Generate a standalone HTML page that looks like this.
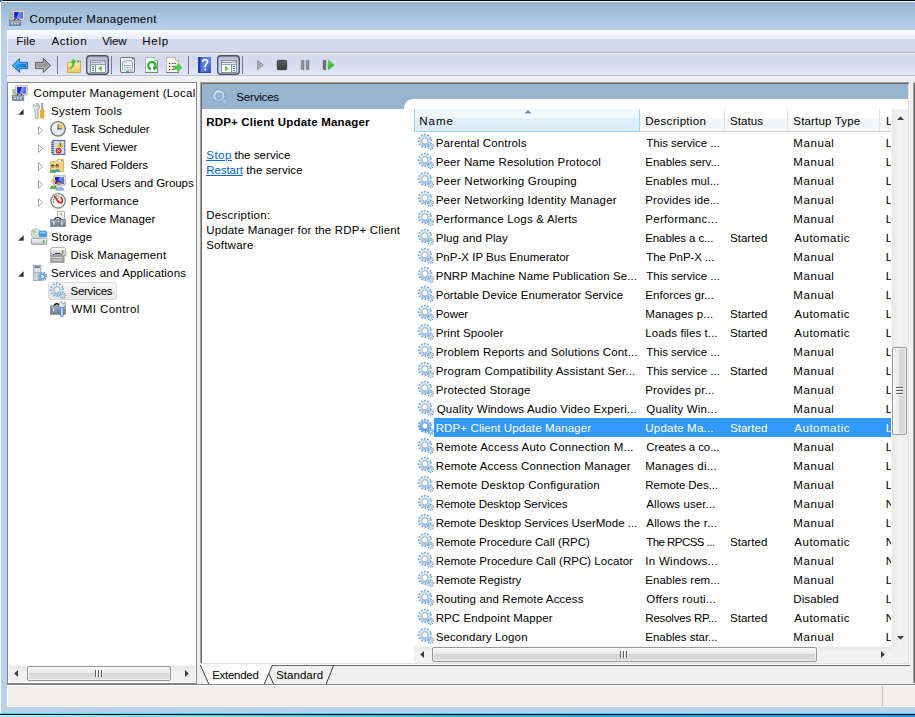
<!DOCTYPE html>
<html lang="en">
<head>
<meta charset="utf-8">
<title>Computer Management</title>
<style>
html,body{margin:0;padding:0;}
body{width:915px;height:717px;overflow:hidden;position:relative;background:#8eeefc;font-family:"Liberation Sans",sans-serif;font-size:11.5px;color:#000;}
.a{position:absolute;box-sizing:border-box;}
.t{position:absolute;white-space:pre;line-height:14px;height:14px;font-size:11.5px;color:#000;}
.t.b{font-weight:bold;}
.t.w{color:#fff;}
.t.lnk{color:#0066cc;text-decoration:underline;}
.ic{position:absolute;overflow:visible;}
</style>
</head>
<body>
<!-- desktop strip at the bottom -->
<div class="a" style="left:0;top:713px;width:915px;height:1px;background:#45d6ee"></div>
<div class="a" style="left:0;top:714px;width:915px;height:1px;background:#000"></div>
<div class="a" style="left:0;top:715px;width:915px;height:2px;background:linear-gradient(90deg,#a8f5ff 0,#8eeeff 6%,#58d2f8 30%,#30b6f5 50%,#20a6f5 70%,#1e9bf0 100%)"></div>
<!-- window frame -->
<div class="a" id="win" style="left:0;top:0;width:915px;height:713px;background:#b9d1ea;"></div>
<div class="a" style="left:0;top:0;width:915px;height:1px;background:#000"></div>
<div class="a" style="left:0;top:1px;width:915px;height:1px;background:#fff"></div>
<div class="a" style="left:0;top:2px;width:1px;height:711px;background:#fff"></div>
<div class="a" id="cap" style="left:1px;top:2px;width:914px;height:28px;background:linear-gradient(#98b3d2,#b9d1ea)"></div>
<div class="a" style="left:0;top:0;width:2px;height:1px;background:#1c58c0"></div><div class="a" style="left:0;top:1px;width:1px;height:1px;background:#2a62c4"></div><div class="a" style="left:2px;top:0;width:1px;height:1px;background:#55607a"></div>
<!-- menu bar -->
<div class="a" id="menu" style="left:7px;top:30px;width:908px;height:22px;background:linear-gradient(#fff 0,#e8ecf7 9px,#d4daed 9px,#d4daed 22px)"></div>
<div class="a" style="left:7px;top:52px;width:908px;height:1px;background:#aeaeb0"></div>
<!-- toolbar -->
<div class="a" id="tb" style="left:7px;top:53px;width:908px;height:22px;background:linear-gradient(#f1f4fb 0,#f1f4fb 1px,#d4daed 1px,#d6dcee 11px,#e0e6f5 22px)"></div>
<div class="a" style="left:7px;top:75px;width:908px;height:1px;background:#b8c0d6"></div>
<div class="a" style="left:7px;top:30px;width:1px;height:45px;background:rgba(255,255,255,.55)"></div>
<!-- client bg -->
<div class="a" id="client" style="left:7px;top:76px;width:908px;height:609px;background:#f0f0f0"></div>
<!-- tree pane -->
<div class="a" id="tree" style="left:7px;top:82px;width:190px;height:602px;background:#fff;border:1px solid #828790"></div>
<!-- tree hscroll -->
<div class="a" style="left:9px;top:665px;width:186px;height:1px;background:#f8f8f8"></div><div class="a" style="left:9px;top:666px;width:186px;height:16px;background:linear-gradient(#e8e8e8,#f2f2f2 40%,#f0f0f0)"></div>
<!-- result pane -->
<div class="a" id="res" style="left:200px;top:82px;width:710px;height:583px;background:#fff;border-left:1px solid #a0a0a0;border-top:1px solid #a0a0a0;border-right:1px solid #fff;"></div>
<div class="a" style="left:201px;top:83px;width:708px;height:580px;border-left:1px solid #696969;border-top:1px solid #696969;border-right:1px solid #e3e3e3"></div>
<div class="a" id="reshead" style="left:202px;top:84px;width:706px;height:25px;background:#99b4d1"></div>
<div class="a" style="left:404px;top:99px;width:504px;height:10px;background:#fff;border-top-left-radius:9px"></div>
<!-- actions pane sliver -->
<div class="a" style="left:913px;top:82px;width:1px;height:601px;background:#a0a0a0"></div>
<div class="a" style="left:914px;top:83px;width:1px;height:600px;background:#696969"></div>
<!-- column headers -->
<div class="a" id="hdr" style="left:414px;top:109px;width:477px;height:23px;background:linear-gradient(#fff 0,#fff 9px,#f5f6f8 9px,#f4f5f7 22px);border-bottom:1px solid #d5d5d5"></div>
<div class="a" id="hname" style="left:414px;top:109px;width:226px;height:23px;background:linear-gradient(#f2f9fd 0,#f2f9fd 9px,#e1effa 9px,#dcebf8 22px);border:1px solid #9fd5f2;border-top:none;"></div>
<div class="a" style="left:724px;top:109px;width:1px;height:22px;background:#e2e3e8"></div>
<div class="a" style="left:787px;top:109px;width:1px;height:22px;background:#e2e3e8"></div>
<div class="a" style="left:879px;top:109px;width:1px;height:22px;background:#e2e3e8"></div>
<svg class="ic" style="left:524px;top:109px" width="8" height="5" viewBox="0 0 8 5"><path d="M0.5 4.5 L4 1 L7.5 4.5 Z" fill="#5a8fbf"/></svg>
<!-- selected row -->
<div class="a" style="left:434px;top:418px;width:457px;height:19px;background:#3399ff"></div>
<!-- vertical scrollbar -->
<div class="a" style="left:891px;top:109px;width:1px;height:537px;background:#f8f8f8"></div>
<div class="a" id="vs" style="left:892px;top:109px;width:16px;height:537px;background:linear-gradient(90deg,#e8e8e8,#f2f2f2 40%,#f0f0f0)"></div>
<div class="a" id="vthumb" style="left:892px;top:347px;width:15px;height:88px;border:1px solid #979797;border-radius:2px;background:linear-gradient(90deg,#f5f5f5 0,#ececec 45%,#d6d6d9 50%,#dddde0 100%);box-shadow:inset 0 0 0 1px rgba(255,255,255,.6)"></div>
<svg class="ic" style="left:897px;top:116px" width="7" height="4" viewBox="0 0 7 4"><path d="M0 4 L3.5 0.2 L7 4 Z" fill="#3c3c3c"/></svg>
<svg class="ic" style="left:897px;top:636px" width="7" height="4" viewBox="0 0 7 4"><path d="M0 0 L7 0 L3.5 3.8 Z" fill="#3c3c3c"/></svg>
<div class="a" style="left:896px;top:387px;width:7px;height:1px;background:#5a5a5a"></div><div class="a" style="left:896px;top:388px;width:7px;height:1px;background:#fafafa"></div>
<div class="a" style="left:896px;top:390px;width:7px;height:1px;background:#5a5a5a"></div><div class="a" style="left:896px;top:391px;width:7px;height:1px;background:#fafafa"></div>
<div class="a" style="left:896px;top:393px;width:7px;height:1px;background:#5a5a5a"></div><div class="a" style="left:896px;top:394px;width:7px;height:1px;background:#fafafa"></div>
<!-- horizontal scrollbar (list) -->
<div class="a" style="left:414px;top:646px;width:494px;height:1px;background:#f8f8f8"></div>
<div class="a" id="hs" style="left:414px;top:647px;width:477px;height:16px;background:linear-gradient(#e8e8e8,#f2f2f2 40%,#f0f0f0)"></div>
<div class="a" style="left:891px;top:646px;width:17px;height:17px;background:#f0f0f0"></div>
<div class="a" id="hthumb" style="left:432px;top:647px;width:385px;height:15px;border:1px solid #979797;border-radius:2px;background:linear-gradient(#f5f5f5 0,#ececec 45%,#d6d6d9 50%,#dddde0 100%);box-shadow:inset 0 0 0 1px rgba(255,255,255,.6)"></div>
<svg class="ic" style="left:420px;top:651px" width="4" height="7" viewBox="0 0 4 7"><path d="M4 0 L4 7 L0.2 3.5 Z" fill="#3c3c3c"/></svg>
<svg class="ic" style="left:881px;top:651px" width="4" height="7" viewBox="0 0 4 7"><path d="M0 0 L0 7 L3.8 3.5 Z" fill="#3c3c3c"/></svg>
<div class="a" style="left:620px;top:651px;width:1px;height:7px;background:#5a5a5a"></div><div class="a" style="left:621px;top:651px;width:1px;height:7px;background:#fafafa"></div>
<div class="a" style="left:623px;top:651px;width:1px;height:7px;background:#5a5a5a"></div><div class="a" style="left:624px;top:651px;width:1px;height:7px;background:#fafafa"></div>
<div class="a" style="left:626px;top:651px;width:1px;height:7px;background:#5a5a5a"></div><div class="a" style="left:627px;top:651px;width:1px;height:7px;background:#fafafa"></div>
<!-- tree hscroll details -->
<div class="a" style="left:27px;top:666px;width:144px;height:15px;border:1px solid #979797;border-radius:2px;background:linear-gradient(#f5f5f5 0,#ececec 45%,#d6d6d9 50%,#dddde0 100%);box-shadow:inset 0 0 0 1px rgba(255,255,255,.6)"></div>
<svg class="ic" style="left:14px;top:670px" width="4" height="7" viewBox="0 0 4 7"><path d="M4 0 L4 7 L0.2 3.5 Z" fill="#3c3c3c"/></svg>
<svg class="ic" style="left:185px;top:670px" width="4" height="7" viewBox="0 0 4 7"><path d="M0 0 L0 7 L3.8 3.5 Z" fill="#3c3c3c"/></svg>
<div class="a" style="left:95px;top:670px;width:1px;height:7px;background:#5a5a5a"></div><div class="a" style="left:96px;top:670px;width:1px;height:7px;background:#fafafa"></div>
<div class="a" style="left:98px;top:670px;width:1px;height:7px;background:#5a5a5a"></div><div class="a" style="left:99px;top:670px;width:1px;height:7px;background:#fafafa"></div>
<div class="a" style="left:101px;top:670px;width:1px;height:7px;background:#5a5a5a"></div><div class="a" style="left:102px;top:670px;width:1px;height:7px;background:#fafafa"></div>
<!-- tabs -->
<svg class="ic" style="left:0;top:0" width="915" height="717" viewBox="0 0 915 717">
<rect x="197" y="665" width="716" height="19" fill="#f0f0f0"/>
<rect x="200" y="663" width="709" height="1" fill="#e3e3e3"/>
<rect x="200" y="664" width="710" height="1" fill="#fff"/>
<path d="M200 664 L272.5 664 L264.5 684 L208.8 684 Z" fill="#fff"/>
<rect x="272" y="665" width="638" height="1" fill="#696969"/>
<path d="M200.3 665 L208.8 684 M272.4 665.2 L264.3 684 M268.9 673.7 L273.6 684 M333.6 665.4 L326.2 684" stroke="#3c3c3c" stroke-width="1" fill="none"/>
<rect x="7" y="684" width="908" height="1" fill="#828282"/>
</svg>
<!-- status bar -->
<div class="a" style="left:7px;top:685px;width:908px;height:1px;background:#fff"></div>
<div class="a" id="status" style="left:7px;top:686px;width:908px;height:20px;background:#f0eded"></div>
<div class="a" style="left:7px;top:685px;width:1px;height:22px;background:#fff"></div>
<div class="a" style="left:7px;top:706px;width:908px;height:1px;background:#fff"></div>
<div class="a" style="left:882px;top:686px;width:1px;height:20px;background:#c5c3c3"></div>
<!-- tree selection -->
<div class="a" style="left:48px;top:282px;width:69px;height:18px;border:1px solid #d9d9d9;border-radius:3px;background:linear-gradient(#f8f8f8,#e5e5e5)"></div>
<svg class="ic" style="left:418px;top:134px" width="16" height="16" viewBox="0 0 16 16"><g><circle cx="6.9" cy="6.9" r="6" fill="none" stroke="#7fa4ca" stroke-width="2.2" stroke-dasharray="1.7 1.4416" transform="rotate(-16 6.9 6.9)"/>
<circle cx="6.9" cy="6.9" r="4.4" fill="none" stroke="url(#gring)" stroke-width="2.4"/>
<circle cx="6.9" cy="6.9" r="3.1" fill="none" stroke="#858d94" stroke-width="0.8" stroke-opacity="0.85"/>
<circle cx="12.6" cy="12.6" r="2.7" fill="none" stroke="#7fa4ca" stroke-width="1.7" stroke-dasharray="1.1 1.0206" transform="rotate(-15 12.6 12.6)"/>
<circle cx="12.6" cy="12.6" r="1.6" fill="none" stroke="#a3c7e6" stroke-width="1.3"/></g></svg>
<svg class="ic" style="left:418px;top:153px" width="16" height="16" viewBox="0 0 16 16"><g><circle cx="6.9" cy="6.9" r="6" fill="none" stroke="#7fa4ca" stroke-width="2.2" stroke-dasharray="1.7 1.4416" transform="rotate(-16 6.9 6.9)"/>
<circle cx="6.9" cy="6.9" r="4.4" fill="none" stroke="url(#gring)" stroke-width="2.4"/>
<circle cx="6.9" cy="6.9" r="3.1" fill="none" stroke="#858d94" stroke-width="0.8" stroke-opacity="0.85"/>
<circle cx="12.6" cy="12.6" r="2.7" fill="none" stroke="#7fa4ca" stroke-width="1.7" stroke-dasharray="1.1 1.0206" transform="rotate(-15 12.6 12.6)"/>
<circle cx="12.6" cy="12.6" r="1.6" fill="none" stroke="#a3c7e6" stroke-width="1.3"/></g></svg>
<svg class="ic" style="left:418px;top:172px" width="16" height="16" viewBox="0 0 16 16"><g><circle cx="6.9" cy="6.9" r="6" fill="none" stroke="#7fa4ca" stroke-width="2.2" stroke-dasharray="1.7 1.4416" transform="rotate(-16 6.9 6.9)"/>
<circle cx="6.9" cy="6.9" r="4.4" fill="none" stroke="url(#gring)" stroke-width="2.4"/>
<circle cx="6.9" cy="6.9" r="3.1" fill="none" stroke="#858d94" stroke-width="0.8" stroke-opacity="0.85"/>
<circle cx="12.6" cy="12.6" r="2.7" fill="none" stroke="#7fa4ca" stroke-width="1.7" stroke-dasharray="1.1 1.0206" transform="rotate(-15 12.6 12.6)"/>
<circle cx="12.6" cy="12.6" r="1.6" fill="none" stroke="#a3c7e6" stroke-width="1.3"/></g></svg>
<svg class="ic" style="left:418px;top:191px" width="16" height="16" viewBox="0 0 16 16"><g><circle cx="6.9" cy="6.9" r="6" fill="none" stroke="#7fa4ca" stroke-width="2.2" stroke-dasharray="1.7 1.4416" transform="rotate(-16 6.9 6.9)"/>
<circle cx="6.9" cy="6.9" r="4.4" fill="none" stroke="url(#gring)" stroke-width="2.4"/>
<circle cx="6.9" cy="6.9" r="3.1" fill="none" stroke="#858d94" stroke-width="0.8" stroke-opacity="0.85"/>
<circle cx="12.6" cy="12.6" r="2.7" fill="none" stroke="#7fa4ca" stroke-width="1.7" stroke-dasharray="1.1 1.0206" transform="rotate(-15 12.6 12.6)"/>
<circle cx="12.6" cy="12.6" r="1.6" fill="none" stroke="#a3c7e6" stroke-width="1.3"/></g></svg>
<svg class="ic" style="left:418px;top:210px" width="16" height="16" viewBox="0 0 16 16"><g><circle cx="6.9" cy="6.9" r="6" fill="none" stroke="#7fa4ca" stroke-width="2.2" stroke-dasharray="1.7 1.4416" transform="rotate(-16 6.9 6.9)"/>
<circle cx="6.9" cy="6.9" r="4.4" fill="none" stroke="url(#gring)" stroke-width="2.4"/>
<circle cx="6.9" cy="6.9" r="3.1" fill="none" stroke="#858d94" stroke-width="0.8" stroke-opacity="0.85"/>
<circle cx="12.6" cy="12.6" r="2.7" fill="none" stroke="#7fa4ca" stroke-width="1.7" stroke-dasharray="1.1 1.0206" transform="rotate(-15 12.6 12.6)"/>
<circle cx="12.6" cy="12.6" r="1.6" fill="none" stroke="#a3c7e6" stroke-width="1.3"/></g></svg>
<svg class="ic" style="left:418px;top:229px" width="16" height="16" viewBox="0 0 16 16"><g><circle cx="6.9" cy="6.9" r="6" fill="none" stroke="#7fa4ca" stroke-width="2.2" stroke-dasharray="1.7 1.4416" transform="rotate(-16 6.9 6.9)"/>
<circle cx="6.9" cy="6.9" r="4.4" fill="none" stroke="url(#gring)" stroke-width="2.4"/>
<circle cx="6.9" cy="6.9" r="3.1" fill="none" stroke="#858d94" stroke-width="0.8" stroke-opacity="0.85"/>
<circle cx="12.6" cy="12.6" r="2.7" fill="none" stroke="#7fa4ca" stroke-width="1.7" stroke-dasharray="1.1 1.0206" transform="rotate(-15 12.6 12.6)"/>
<circle cx="12.6" cy="12.6" r="1.6" fill="none" stroke="#a3c7e6" stroke-width="1.3"/></g></svg>
<svg class="ic" style="left:418px;top:248px" width="16" height="16" viewBox="0 0 16 16"><g><circle cx="6.9" cy="6.9" r="6" fill="none" stroke="#7fa4ca" stroke-width="2.2" stroke-dasharray="1.7 1.4416" transform="rotate(-16 6.9 6.9)"/>
<circle cx="6.9" cy="6.9" r="4.4" fill="none" stroke="url(#gring)" stroke-width="2.4"/>
<circle cx="6.9" cy="6.9" r="3.1" fill="none" stroke="#858d94" stroke-width="0.8" stroke-opacity="0.85"/>
<circle cx="12.6" cy="12.6" r="2.7" fill="none" stroke="#7fa4ca" stroke-width="1.7" stroke-dasharray="1.1 1.0206" transform="rotate(-15 12.6 12.6)"/>
<circle cx="12.6" cy="12.6" r="1.6" fill="none" stroke="#a3c7e6" stroke-width="1.3"/></g></svg>
<svg class="ic" style="left:418px;top:267px" width="16" height="16" viewBox="0 0 16 16"><g><circle cx="6.9" cy="6.9" r="6" fill="none" stroke="#7fa4ca" stroke-width="2.2" stroke-dasharray="1.7 1.4416" transform="rotate(-16 6.9 6.9)"/>
<circle cx="6.9" cy="6.9" r="4.4" fill="none" stroke="url(#gring)" stroke-width="2.4"/>
<circle cx="6.9" cy="6.9" r="3.1" fill="none" stroke="#858d94" stroke-width="0.8" stroke-opacity="0.85"/>
<circle cx="12.6" cy="12.6" r="2.7" fill="none" stroke="#7fa4ca" stroke-width="1.7" stroke-dasharray="1.1 1.0206" transform="rotate(-15 12.6 12.6)"/>
<circle cx="12.6" cy="12.6" r="1.6" fill="none" stroke="#a3c7e6" stroke-width="1.3"/></g></svg>
<svg class="ic" style="left:418px;top:286px" width="16" height="16" viewBox="0 0 16 16"><g><circle cx="6.9" cy="6.9" r="6" fill="none" stroke="#7fa4ca" stroke-width="2.2" stroke-dasharray="1.7 1.4416" transform="rotate(-16 6.9 6.9)"/>
<circle cx="6.9" cy="6.9" r="4.4" fill="none" stroke="url(#gring)" stroke-width="2.4"/>
<circle cx="6.9" cy="6.9" r="3.1" fill="none" stroke="#858d94" stroke-width="0.8" stroke-opacity="0.85"/>
<circle cx="12.6" cy="12.6" r="2.7" fill="none" stroke="#7fa4ca" stroke-width="1.7" stroke-dasharray="1.1 1.0206" transform="rotate(-15 12.6 12.6)"/>
<circle cx="12.6" cy="12.6" r="1.6" fill="none" stroke="#a3c7e6" stroke-width="1.3"/></g></svg>
<svg class="ic" style="left:418px;top:305px" width="16" height="16" viewBox="0 0 16 16"><g><circle cx="6.9" cy="6.9" r="6" fill="none" stroke="#7fa4ca" stroke-width="2.2" stroke-dasharray="1.7 1.4416" transform="rotate(-16 6.9 6.9)"/>
<circle cx="6.9" cy="6.9" r="4.4" fill="none" stroke="url(#gring)" stroke-width="2.4"/>
<circle cx="6.9" cy="6.9" r="3.1" fill="none" stroke="#858d94" stroke-width="0.8" stroke-opacity="0.85"/>
<circle cx="12.6" cy="12.6" r="2.7" fill="none" stroke="#7fa4ca" stroke-width="1.7" stroke-dasharray="1.1 1.0206" transform="rotate(-15 12.6 12.6)"/>
<circle cx="12.6" cy="12.6" r="1.6" fill="none" stroke="#a3c7e6" stroke-width="1.3"/></g></svg>
<svg class="ic" style="left:418px;top:324px" width="16" height="16" viewBox="0 0 16 16"><g><circle cx="6.9" cy="6.9" r="6" fill="none" stroke="#7fa4ca" stroke-width="2.2" stroke-dasharray="1.7 1.4416" transform="rotate(-16 6.9 6.9)"/>
<circle cx="6.9" cy="6.9" r="4.4" fill="none" stroke="url(#gring)" stroke-width="2.4"/>
<circle cx="6.9" cy="6.9" r="3.1" fill="none" stroke="#858d94" stroke-width="0.8" stroke-opacity="0.85"/>
<circle cx="12.6" cy="12.6" r="2.7" fill="none" stroke="#7fa4ca" stroke-width="1.7" stroke-dasharray="1.1 1.0206" transform="rotate(-15 12.6 12.6)"/>
<circle cx="12.6" cy="12.6" r="1.6" fill="none" stroke="#a3c7e6" stroke-width="1.3"/></g></svg>
<svg class="ic" style="left:418px;top:343px" width="16" height="16" viewBox="0 0 16 16"><g><circle cx="6.9" cy="6.9" r="6" fill="none" stroke="#7fa4ca" stroke-width="2.2" stroke-dasharray="1.7 1.4416" transform="rotate(-16 6.9 6.9)"/>
<circle cx="6.9" cy="6.9" r="4.4" fill="none" stroke="url(#gring)" stroke-width="2.4"/>
<circle cx="6.9" cy="6.9" r="3.1" fill="none" stroke="#858d94" stroke-width="0.8" stroke-opacity="0.85"/>
<circle cx="12.6" cy="12.6" r="2.7" fill="none" stroke="#7fa4ca" stroke-width="1.7" stroke-dasharray="1.1 1.0206" transform="rotate(-15 12.6 12.6)"/>
<circle cx="12.6" cy="12.6" r="1.6" fill="none" stroke="#a3c7e6" stroke-width="1.3"/></g></svg>
<svg class="ic" style="left:418px;top:362px" width="16" height="16" viewBox="0 0 16 16"><g><circle cx="6.9" cy="6.9" r="6" fill="none" stroke="#7fa4ca" stroke-width="2.2" stroke-dasharray="1.7 1.4416" transform="rotate(-16 6.9 6.9)"/>
<circle cx="6.9" cy="6.9" r="4.4" fill="none" stroke="url(#gring)" stroke-width="2.4"/>
<circle cx="6.9" cy="6.9" r="3.1" fill="none" stroke="#858d94" stroke-width="0.8" stroke-opacity="0.85"/>
<circle cx="12.6" cy="12.6" r="2.7" fill="none" stroke="#7fa4ca" stroke-width="1.7" stroke-dasharray="1.1 1.0206" transform="rotate(-15 12.6 12.6)"/>
<circle cx="12.6" cy="12.6" r="1.6" fill="none" stroke="#a3c7e6" stroke-width="1.3"/></g></svg>
<svg class="ic" style="left:418px;top:381px" width="16" height="16" viewBox="0 0 16 16"><g><circle cx="6.9" cy="6.9" r="6" fill="none" stroke="#7fa4ca" stroke-width="2.2" stroke-dasharray="1.7 1.4416" transform="rotate(-16 6.9 6.9)"/>
<circle cx="6.9" cy="6.9" r="4.4" fill="none" stroke="url(#gring)" stroke-width="2.4"/>
<circle cx="6.9" cy="6.9" r="3.1" fill="none" stroke="#858d94" stroke-width="0.8" stroke-opacity="0.85"/>
<circle cx="12.6" cy="12.6" r="2.7" fill="none" stroke="#7fa4ca" stroke-width="1.7" stroke-dasharray="1.1 1.0206" transform="rotate(-15 12.6 12.6)"/>
<circle cx="12.6" cy="12.6" r="1.6" fill="none" stroke="#a3c7e6" stroke-width="1.3"/></g></svg>
<svg class="ic" style="left:418px;top:400px" width="16" height="16" viewBox="0 0 16 16"><g><circle cx="6.9" cy="6.9" r="6" fill="none" stroke="#7fa4ca" stroke-width="2.2" stroke-dasharray="1.7 1.4416" transform="rotate(-16 6.9 6.9)"/>
<circle cx="6.9" cy="6.9" r="4.4" fill="none" stroke="url(#gring)" stroke-width="2.4"/>
<circle cx="6.9" cy="6.9" r="3.1" fill="none" stroke="#858d94" stroke-width="0.8" stroke-opacity="0.85"/>
<circle cx="12.6" cy="12.6" r="2.7" fill="none" stroke="#7fa4ca" stroke-width="1.7" stroke-dasharray="1.1 1.0206" transform="rotate(-15 12.6 12.6)"/>
<circle cx="12.6" cy="12.6" r="1.6" fill="none" stroke="#a3c7e6" stroke-width="1.3"/></g></svg>
<svg class="ic" style="left:418px;top:419px" width="16" height="16" viewBox="0 0 16 16"><g><circle cx="6.9" cy="6.9" r="6" fill="none" stroke="#5f9fe6" stroke-width="2.2" stroke-dasharray="1.7 1.4416" transform="rotate(-16 6.9 6.9)"/>
<circle cx="6.9" cy="6.9" r="4.4" fill="none" stroke="url(#gringS)" stroke-width="2.4"/>
<circle cx="6.9" cy="6.9" r="3.1" fill="none" stroke="#5a8fd4" stroke-width="0.8"/>
<circle cx="12.6" cy="12.6" r="2.7" fill="none" stroke="#5f9fe6" stroke-width="1.7" stroke-dasharray="1.1 1.0206" transform="rotate(-15 12.6 12.6)"/>
<circle cx="12.6" cy="12.6" r="1.6" fill="none" stroke="#7fb8f4" stroke-width="1.3"/></g></svg>
<svg class="ic" style="left:418px;top:438px" width="16" height="16" viewBox="0 0 16 16"><g><circle cx="6.9" cy="6.9" r="6" fill="none" stroke="#7fa4ca" stroke-width="2.2" stroke-dasharray="1.7 1.4416" transform="rotate(-16 6.9 6.9)"/>
<circle cx="6.9" cy="6.9" r="4.4" fill="none" stroke="url(#gring)" stroke-width="2.4"/>
<circle cx="6.9" cy="6.9" r="3.1" fill="none" stroke="#858d94" stroke-width="0.8" stroke-opacity="0.85"/>
<circle cx="12.6" cy="12.6" r="2.7" fill="none" stroke="#7fa4ca" stroke-width="1.7" stroke-dasharray="1.1 1.0206" transform="rotate(-15 12.6 12.6)"/>
<circle cx="12.6" cy="12.6" r="1.6" fill="none" stroke="#a3c7e6" stroke-width="1.3"/></g></svg>
<svg class="ic" style="left:418px;top:457px" width="16" height="16" viewBox="0 0 16 16"><g><circle cx="6.9" cy="6.9" r="6" fill="none" stroke="#7fa4ca" stroke-width="2.2" stroke-dasharray="1.7 1.4416" transform="rotate(-16 6.9 6.9)"/>
<circle cx="6.9" cy="6.9" r="4.4" fill="none" stroke="url(#gring)" stroke-width="2.4"/>
<circle cx="6.9" cy="6.9" r="3.1" fill="none" stroke="#858d94" stroke-width="0.8" stroke-opacity="0.85"/>
<circle cx="12.6" cy="12.6" r="2.7" fill="none" stroke="#7fa4ca" stroke-width="1.7" stroke-dasharray="1.1 1.0206" transform="rotate(-15 12.6 12.6)"/>
<circle cx="12.6" cy="12.6" r="1.6" fill="none" stroke="#a3c7e6" stroke-width="1.3"/></g></svg>
<svg class="ic" style="left:418px;top:476px" width="16" height="16" viewBox="0 0 16 16"><g><circle cx="6.9" cy="6.9" r="6" fill="none" stroke="#7fa4ca" stroke-width="2.2" stroke-dasharray="1.7 1.4416" transform="rotate(-16 6.9 6.9)"/>
<circle cx="6.9" cy="6.9" r="4.4" fill="none" stroke="url(#gring)" stroke-width="2.4"/>
<circle cx="6.9" cy="6.9" r="3.1" fill="none" stroke="#858d94" stroke-width="0.8" stroke-opacity="0.85"/>
<circle cx="12.6" cy="12.6" r="2.7" fill="none" stroke="#7fa4ca" stroke-width="1.7" stroke-dasharray="1.1 1.0206" transform="rotate(-15 12.6 12.6)"/>
<circle cx="12.6" cy="12.6" r="1.6" fill="none" stroke="#a3c7e6" stroke-width="1.3"/></g></svg>
<svg class="ic" style="left:418px;top:495px" width="16" height="16" viewBox="0 0 16 16"><g><circle cx="6.9" cy="6.9" r="6" fill="none" stroke="#7fa4ca" stroke-width="2.2" stroke-dasharray="1.7 1.4416" transform="rotate(-16 6.9 6.9)"/>
<circle cx="6.9" cy="6.9" r="4.4" fill="none" stroke="url(#gring)" stroke-width="2.4"/>
<circle cx="6.9" cy="6.9" r="3.1" fill="none" stroke="#858d94" stroke-width="0.8" stroke-opacity="0.85"/>
<circle cx="12.6" cy="12.6" r="2.7" fill="none" stroke="#7fa4ca" stroke-width="1.7" stroke-dasharray="1.1 1.0206" transform="rotate(-15 12.6 12.6)"/>
<circle cx="12.6" cy="12.6" r="1.6" fill="none" stroke="#a3c7e6" stroke-width="1.3"/></g></svg>
<svg class="ic" style="left:418px;top:514px" width="16" height="16" viewBox="0 0 16 16"><g><circle cx="6.9" cy="6.9" r="6" fill="none" stroke="#7fa4ca" stroke-width="2.2" stroke-dasharray="1.7 1.4416" transform="rotate(-16 6.9 6.9)"/>
<circle cx="6.9" cy="6.9" r="4.4" fill="none" stroke="url(#gring)" stroke-width="2.4"/>
<circle cx="6.9" cy="6.9" r="3.1" fill="none" stroke="#858d94" stroke-width="0.8" stroke-opacity="0.85"/>
<circle cx="12.6" cy="12.6" r="2.7" fill="none" stroke="#7fa4ca" stroke-width="1.7" stroke-dasharray="1.1 1.0206" transform="rotate(-15 12.6 12.6)"/>
<circle cx="12.6" cy="12.6" r="1.6" fill="none" stroke="#a3c7e6" stroke-width="1.3"/></g></svg>
<svg class="ic" style="left:418px;top:533px" width="16" height="16" viewBox="0 0 16 16"><g><circle cx="6.9" cy="6.9" r="6" fill="none" stroke="#7fa4ca" stroke-width="2.2" stroke-dasharray="1.7 1.4416" transform="rotate(-16 6.9 6.9)"/>
<circle cx="6.9" cy="6.9" r="4.4" fill="none" stroke="url(#gring)" stroke-width="2.4"/>
<circle cx="6.9" cy="6.9" r="3.1" fill="none" stroke="#858d94" stroke-width="0.8" stroke-opacity="0.85"/>
<circle cx="12.6" cy="12.6" r="2.7" fill="none" stroke="#7fa4ca" stroke-width="1.7" stroke-dasharray="1.1 1.0206" transform="rotate(-15 12.6 12.6)"/>
<circle cx="12.6" cy="12.6" r="1.6" fill="none" stroke="#a3c7e6" stroke-width="1.3"/></g></svg>
<svg class="ic" style="left:418px;top:552px" width="16" height="16" viewBox="0 0 16 16"><g><circle cx="6.9" cy="6.9" r="6" fill="none" stroke="#7fa4ca" stroke-width="2.2" stroke-dasharray="1.7 1.4416" transform="rotate(-16 6.9 6.9)"/>
<circle cx="6.9" cy="6.9" r="4.4" fill="none" stroke="url(#gring)" stroke-width="2.4"/>
<circle cx="6.9" cy="6.9" r="3.1" fill="none" stroke="#858d94" stroke-width="0.8" stroke-opacity="0.85"/>
<circle cx="12.6" cy="12.6" r="2.7" fill="none" stroke="#7fa4ca" stroke-width="1.7" stroke-dasharray="1.1 1.0206" transform="rotate(-15 12.6 12.6)"/>
<circle cx="12.6" cy="12.6" r="1.6" fill="none" stroke="#a3c7e6" stroke-width="1.3"/></g></svg>
<svg class="ic" style="left:418px;top:571px" width="16" height="16" viewBox="0 0 16 16"><g><circle cx="6.9" cy="6.9" r="6" fill="none" stroke="#7fa4ca" stroke-width="2.2" stroke-dasharray="1.7 1.4416" transform="rotate(-16 6.9 6.9)"/>
<circle cx="6.9" cy="6.9" r="4.4" fill="none" stroke="url(#gring)" stroke-width="2.4"/>
<circle cx="6.9" cy="6.9" r="3.1" fill="none" stroke="#858d94" stroke-width="0.8" stroke-opacity="0.85"/>
<circle cx="12.6" cy="12.6" r="2.7" fill="none" stroke="#7fa4ca" stroke-width="1.7" stroke-dasharray="1.1 1.0206" transform="rotate(-15 12.6 12.6)"/>
<circle cx="12.6" cy="12.6" r="1.6" fill="none" stroke="#a3c7e6" stroke-width="1.3"/></g></svg>
<svg class="ic" style="left:418px;top:590px" width="16" height="16" viewBox="0 0 16 16"><g><circle cx="6.9" cy="6.9" r="6" fill="none" stroke="#7fa4ca" stroke-width="2.2" stroke-dasharray="1.7 1.4416" transform="rotate(-16 6.9 6.9)"/>
<circle cx="6.9" cy="6.9" r="4.4" fill="none" stroke="url(#gring)" stroke-width="2.4"/>
<circle cx="6.9" cy="6.9" r="3.1" fill="none" stroke="#858d94" stroke-width="0.8" stroke-opacity="0.85"/>
<circle cx="12.6" cy="12.6" r="2.7" fill="none" stroke="#7fa4ca" stroke-width="1.7" stroke-dasharray="1.1 1.0206" transform="rotate(-15 12.6 12.6)"/>
<circle cx="12.6" cy="12.6" r="1.6" fill="none" stroke="#a3c7e6" stroke-width="1.3"/></g></svg>
<svg class="ic" style="left:418px;top:609px" width="16" height="16" viewBox="0 0 16 16"><g><circle cx="6.9" cy="6.9" r="6" fill="none" stroke="#7fa4ca" stroke-width="2.2" stroke-dasharray="1.7 1.4416" transform="rotate(-16 6.9 6.9)"/>
<circle cx="6.9" cy="6.9" r="4.4" fill="none" stroke="url(#gring)" stroke-width="2.4"/>
<circle cx="6.9" cy="6.9" r="3.1" fill="none" stroke="#858d94" stroke-width="0.8" stroke-opacity="0.85"/>
<circle cx="12.6" cy="12.6" r="2.7" fill="none" stroke="#7fa4ca" stroke-width="1.7" stroke-dasharray="1.1 1.0206" transform="rotate(-15 12.6 12.6)"/>
<circle cx="12.6" cy="12.6" r="1.6" fill="none" stroke="#a3c7e6" stroke-width="1.3"/></g></svg>
<svg class="ic" style="left:418px;top:628px" width="16" height="16" viewBox="0 0 16 16"><g><circle cx="6.9" cy="6.9" r="6" fill="none" stroke="#7fa4ca" stroke-width="2.2" stroke-dasharray="1.7 1.4416" transform="rotate(-16 6.9 6.9)"/>
<circle cx="6.9" cy="6.9" r="4.4" fill="none" stroke="url(#gring)" stroke-width="2.4"/>
<circle cx="6.9" cy="6.9" r="3.1" fill="none" stroke="#858d94" stroke-width="0.8" stroke-opacity="0.85"/>
<circle cx="12.6" cy="12.6" r="2.7" fill="none" stroke="#7fa4ca" stroke-width="1.7" stroke-dasharray="1.1 1.0206" transform="rotate(-15 12.6 12.6)"/>
<circle cx="12.6" cy="12.6" r="1.6" fill="none" stroke="#a3c7e6" stroke-width="1.3"/></g></svg>
<svg width="0" height="0" style="position:absolute"><defs>
<linearGradient id="gring" x1="0" y1="0" x2="0" y2="1"><stop offset="0" stop-color="#cfe9f8"/><stop offset="0.7" stop-color="#c0e0f6"/><stop offset="1" stop-color="#9cc6f2"/></linearGradient>
<linearGradient id="gringS" x1="0" y1="0" x2="0" y2="1"><stop offset="0" stop-color="#8ec4f6"/><stop offset="1" stop-color="#5aa2ee"/></linearGradient>
</defs></svg>
<svg class="ic" style="left:0;top:0" width="915" height="717" viewBox="0 0 915 717">
<defs>
<linearGradient id="gBack" x1="0" y1="0" x2="1" y2="1"><stop offset="0" stop-color="#46b2f4"/><stop offset="0.4" stop-color="#1f9bea"/><stop offset="0.8" stop-color="#0663c6"/><stop offset="1" stop-color="#2d8be0"/></linearGradient>
<linearGradient id="gFwd" x1="0" y1="0" x2="0" y2="1"><stop offset="0" stop-color="#7f7f7f"/><stop offset="0.5" stop-color="#9b9b9b"/><stop offset="1" stop-color="#b5b5b5"/></linearGradient>
<linearGradient id="gFold" x1="0" y1="0" x2="0" y2="1"><stop offset="0" stop-color="#f9e6ab"/><stop offset="1" stop-color="#f0cb6e"/></linearGradient>
<linearGradient id="gBtn" x1="0" y1="0" x2="0" y2="1"><stop offset="0" stop-color="#aab1c4"/><stop offset="0.25" stop-color="#c3c9dc"/><stop offset="1" stop-color="#d6dcee"/></linearGradient>
<linearGradient id="gHelp" x1="0" y1="0" x2="1" y2="1"><stop offset="0" stop-color="#3a62d6"/><stop offset="0.5" stop-color="#6283e2"/><stop offset="1" stop-color="#2f52c4"/></linearGradient>
<linearGradient id="gPlay" x1="0" y1="0" x2="1" y2="1"><stop offset="0" stop-color="#8c8c8c"/><stop offset="1" stop-color="#d0d0d0"/></linearGradient>
<linearGradient id="gStop" x1="0" y1="0" x2="0" y2="1"><stop offset="0" stop-color="#5a5a5a"/><stop offset="1" stop-color="#3c3c3c"/></linearGradient>
<linearGradient id="gGreen" x1="0" y1="0" x2="0" y2="1"><stop offset="0" stop-color="#6ee04a"/><stop offset="1" stop-color="#1fa51f"/></linearGradient>
</defs>
<!-- back / forward -->
<path d="M12.3 65.5 L19.6 58.6 L19.6 62.4 L27.5 62.4 L27.5 68.6 L19.6 68.6 L19.6 72.4 Z" fill="url(#gBack)" stroke="#1f68bc" stroke-width="1" stroke-linejoin="round"/>
<path d="M50.7 65.5 L43.4 58.6 L43.4 62.4 L35.5 62.4 L35.5 68.6 L43.4 68.6 L43.4 72.4 Z" fill="url(#gFwd)" stroke="#5c5c5c" stroke-width="1" stroke-linejoin="round"/>
<path d="M13.9 65.5 L18.7 61 L18.7 63.4 L26.5 63.4 L26.5 67.6 L18.7 67.6 L18.7 70 Z" fill="none" stroke="#8fd0fa" stroke-opacity="0.75" stroke-width="0.8" stroke-linejoin="round"/>
<path d="M49.1 65.5 L44.3 61 L44.3 63.4 L36.5 63.4 L36.5 67.6 L44.3 67.6 L44.3 70 Z" fill="none" stroke="#fff" stroke-opacity="0.3" stroke-width="0.8" stroke-linejoin="round"/>
<!-- separators -->
<rect x="57" y="56" width="1" height="18" fill="#757a8c"/>
<rect x="111" y="56" width="1" height="18" fill="#757a8c"/>
<rect x="188" y="56" width="1" height="18" fill="#757a8c"/>
<rect x="242" y="56" width="1" height="18" fill="#757a8c"/>
<!-- up folder -->
<path d="M67.5 62.5 L67.5 72.5 L80.5 72.5 L80.5 60.5 L75.5 60.5 L74.5 62.5 Z" fill="url(#gFold)" stroke="#d4aa48" stroke-width="1"/>
<rect x="68" y="63.6" width="12" height="1" fill="#fbeab8"/>
<rect x="77" y="61" width="2.4" height="1.4" fill="#4a90e8"/>
<path d="M69.4 68 C71.8 67.2 72.6 65 72.5 62.4 L71 62.4 L73.3 58.8 L75.6 62.4 L74.2 62.4 C74.4 65.4 73.2 68 70 68.8 Z" fill="#43c83c" stroke="#2fae2f" stroke-width="0.4"/>
<!-- pressed button 1 -->
<rect x="86.7" y="55.7" width="21.6" height="18.6" rx="3.2" fill="url(#gBtn)" stroke="#4d5262" stroke-width="1.4"/>
<g id="cons1">
<rect x="90.5" y="60.5" width="15" height="12" fill="#fff" stroke="#8a8f9c" stroke-width="1"/>
<rect x="91" y="61" width="14" height="3" fill="#dfe2ea"/>
<rect x="91" y="62" width="10" height="1" fill="#8c93a8"/>
<rect x="102" y="61.5" width="1" height="1" fill="#6c7690"/><rect x="104" y="61.5" width="1" height="1" fill="#6c7690"/>
<rect x="91" y="64" width="14" height="1" fill="#9aa0b0"/>
<rect x="91" y="65" width="4" height="7" fill="#eef0f6"/>
<rect x="95" y="65" width="1" height="7" fill="#8a8f9c"/>
<rect x="92" y="66" width="2" height="1" fill="#3c7fd0"/><rect x="92" y="68" width="2" height="1" fill="#3c7fd0"/><rect x="92" y="70" width="2" height="1" fill="#3c7fd0"/>
<path d="M101.4 66.2 L101.4 70.8 L98.5 68.5 Z" fill="#46c236" stroke="#34a828" stroke-width="0.4"/>
</g>
<!-- properties -->
<rect x="120.5" y="57.5" width="14" height="15" rx="1.5" fill="#fff" stroke="#70747e" stroke-width="1"/>
<rect x="121" y="58" width="13" height="2" fill="#eceef4"/>
<rect x="132" y="58" width="1.5" height="1.5" fill="#4a66a8"/>
<path d="M122.5 70 L122.5 61.5 L125.5 61.5 L125.5 60.5 L131.5 60.5 L131.5 61.5 L132.5 61.5 L132.5 70 Z" fill="#d4d8e2" stroke="#a9aebd" stroke-width="1"/>
<rect x="126.5" y="61.4" width="2" height="1" fill="#fff"/><rect x="129.2" y="61.4" width="2" height="1" fill="#fff"/>
<rect x="123.5" y="63.3" width="8" height="6" fill="#f4f5f9"/>
<rect x="124" y="65" width="1.2" height="1.2" fill="#1fa8f5"/><rect x="126" y="65" width="5" height="1" fill="#b2b6c2"/>
<rect x="124" y="67.2" width="1.2" height="1" fill="#b0b4c0"/><rect x="126" y="67.2" width="5" height="1" fill="#b2b6c2"/>
<rect x="126" y="70.8" width="3.2" height="1.4" fill="#29b6f6"/><rect x="130" y="70.8" width="3" height="1.4" fill="#bcbcbc"/>
<!-- refresh -->
<path d="M145.5 57.5 L154.5 57.5 L157.5 60.5 L157.5 72.5 L145.5 72.5 Z" fill="#fcfcfc" stroke="#b4b4b4" stroke-width="1"/>
<path d="M145 72.5 L158 72.5 M157.5 61 L157.5 73" stroke="#808080" stroke-width="1" fill="none"/>
<path d="M154.5 57.5 L154.5 60.5 L157.5 60.5" fill="#fff" stroke="#a8a8a8" stroke-width="0.8"/>
<path d="M150.94 69.17 A3.7 3.7 0 1 1 155.25 67.16" fill="none" stroke="#2db42d" stroke-width="2.3"/>
<path d="M152.6 66.2 L157.8 67.6 L154 70.6 Z" fill="#27a327"/>
<!-- export list -->
<path d="M166.5 57.5 L175.5 57.5 L178.5 60.5 L178.5 72.5 L166.5 72.5 Z" fill="#fdf9e6" stroke="#b8b4a6" stroke-width="1"/>
<path d="M166 72.5 L179 72.5" stroke="#7e7a70" stroke-width="1"/>
<path d="M175.5 57.5 L175.5 60.5 L178.5 60.5" fill="#fff" stroke="#aaa" stroke-width="0.8"/>
<rect x="169" y="63" width="1.2" height="1.2" fill="#222"/><rect x="169" y="66" width="1.2" height="1.2" fill="#222"/><rect x="169" y="69" width="1.2" height="1.2" fill="#222"/>
<rect x="171.5" y="63" width="4.5" height="1" fill="#7468b0"/><rect x="171.5" y="66" width="3" height="1" fill="#7468b0"/><rect x="171.5" y="69" width="3" height="1" fill="#7468b0"/>
<path d="M173.8 66 L177.6 66 L177.6 63.8 L182 67.6 L177.6 71.4 L177.6 69.2 L173.8 69.2 Z" fill="#4fd04a" stroke="#2fae2f" stroke-width="0.6"/>
<!-- help -->
<rect x="198" y="57" width="13" height="16" fill="url(#gHelp)"/>
<rect x="198" y="57" width="2.6" height="16" fill="#1b3fb2"/>
<rect x="198" y="72" width="13" height="1" fill="#2a48b0"/>
<path d="M202.6 61.4 C202.8 59.2 207.6 58.8 207.6 61.6 C207.6 63.6 205.2 64 205.2 66.6" fill="none" stroke="#fff" stroke-width="1.7" stroke-linecap="round"/>
<circle cx="205.2" cy="69.6" r="1.05" fill="#fff"/>
<!-- pressed button 2 -->
<rect x="217.7" y="55.7" width="21.6" height="18.6" rx="3.2" fill="url(#gBtn)" stroke="#4d5262" stroke-width="1.4"/>
<g>
<rect x="221.5" y="60.5" width="15" height="12" fill="#fff" stroke="#8a8f9c" stroke-width="1"/>
<rect x="222" y="61" width="14" height="3" fill="#dfe2ea"/>
<rect x="222" y="62" width="10" height="1" fill="#8c93a8"/>
<rect x="233" y="61.5" width="1" height="1" fill="#6c7690"/><rect x="235" y="61.5" width="1" height="1" fill="#6c7690"/>
<rect x="222" y="64" width="14" height="1" fill="#9aa0b0"/>
<rect x="232" y="65" width="4" height="7" fill="#eef0f6"/>
<rect x="231" y="65" width="1" height="7" fill="#8a8f9c"/>
<rect x="233" y="66" width="2" height="1" fill="#3c7fd0"/><rect x="233" y="68" width="2" height="1" fill="#3c7fd0"/><rect x="233" y="70" width="2" height="1" fill="#3c7fd0"/>
<path d="M225.4 66.2 L225.4 70.8 L228.3 68.5 Z" fill="#46c236" stroke="#34a828" stroke-width="0.4"/>
</g>
<!-- play / stop / pause / restart -->
<path d="M257.5 60.3 L263.3 65 L257.5 69.7 Z" fill="url(#gPlay)" stroke="#8a8a8a" stroke-width="0.8" stroke-linejoin="round"/>
<rect x="277.3" y="60.3" width="9.4" height="9.4" rx="1.3" fill="url(#gStop)" stroke="#303030" stroke-width="0.8"/>
<rect x="301.3" y="60.3" width="2.6" height="9.4" rx="0.6" fill="#8d8d8d" stroke="#707070" stroke-width="0.6"/>
<rect x="306.3" y="60.3" width="2.6" height="9.4" rx="0.6" fill="#8d8d8d" stroke="#707070" stroke-width="0.6"/>
<rect x="323.3" y="60.3" width="2.4" height="9.4" rx="0.6" fill="#6d6d6d" stroke="#4a4a4a" stroke-width="0.6"/>
<path d="M328.3 60.2 L334.3 65 L328.3 69.8 Z" fill="url(#gGreen)" stroke="#2fae2f" stroke-width="0.6" stroke-linejoin="round"/>
</svg>
<svg class="ic" style="left:0;top:0" width="915" height="717" viewBox="0 0 915 717">
<defs>
<linearGradient id="gScr" x1="0" y1="0" x2="1" y2="0.3"><stop offset="0" stop-color="#0a14c4"/><stop offset="0.45" stop-color="#1a2ee0"/><stop offset="0.55" stop-color="#7d96f2"/><stop offset="1" stop-color="#4f6ae8"/></linearGradient>
<linearGradient id="gTb" x1="0" y1="0" x2="0" y2="1"><stop offset="0" stop-color="#8ea0ad"/><stop offset="1" stop-color="#6d808e"/></linearGradient>
<linearGradient id="gSil" x1="0" y1="0" x2="1" y2="0"><stop offset="0" stop-color="#fdfdfd"/><stop offset="1" stop-color="#c9c9c9"/></linearGradient>
<radialGradient id="gFace" cx="0.4" cy="0.4" r="0.7"><stop offset="0" stop-color="#fafcfe"/><stop offset="1" stop-color="#d5e0ec"/></radialGradient>
<linearGradient id="gDrv" x1="0" y1="0" x2="0" y2="1"><stop offset="0" stop-color="#f4f4f8"/><stop offset="1" stop-color="#c9c9d2"/></linearGradient>
</defs>
<!-- title icon & root -->
<g transform="translate(9,10)"><rect x="0.9" y="4.5" width="2.6" height="6" fill="#c9c9c9" stroke="#8f8f8f" stroke-width="0.6"/>
<rect x="1.4" y="6.8" width="1.7" height="1.3" fill="#49d23a"/>
<rect x="3.6" y="0.4" width="12" height="9.8" rx="0.8" fill="#dcd9cd" stroke="#b3af9f" stroke-width="0.7"/>
<rect x="5.2" y="2" width="8.8" height="6.6" fill="url(#gScr)"/>
<path d="M4.8 10.6 C5.4 8.6 9.6 8.6 10.2 10.6" fill="none" stroke="#1e1e1e" stroke-width="1.3"/>
<ellipse cx="7.5" cy="9.9" rx="1.6" ry="0.7" fill="#f2f2f2"/>
<rect x="0.3" y="10.5" width="11.6" height="5.2" fill="url(#gTb)" stroke="#64768a" stroke-width="0.5"/>
<rect x="0.6" y="11.3" width="11" height="0.8" fill="#a9b7c2"/>
<rect x="2.4" y="12.6" width="1.4" height="1.7" fill="#e6edf2"/><rect x="5.2" y="12.6" width="1.4" height="1.7" fill="#e6edf2"/><rect x="8" y="12.6" width="1.4" height="1.7" fill="#e6edf2"/></g>
<g transform="translate(12,85)"><rect x="0.9" y="4.5" width="2.6" height="6" fill="#c9c9c9" stroke="#8f8f8f" stroke-width="0.6"/>
<rect x="1.4" y="6.8" width="1.7" height="1.3" fill="#49d23a"/>
<rect x="3.6" y="0.4" width="12" height="9.8" rx="0.8" fill="#dcd9cd" stroke="#b3af9f" stroke-width="0.7"/>
<rect x="5.2" y="2" width="8.8" height="6.6" fill="url(#gScr)"/>
<path d="M4.8 10.6 C5.4 8.6 9.6 8.6 10.2 10.6" fill="none" stroke="#1e1e1e" stroke-width="1.3"/>
<ellipse cx="7.5" cy="9.9" rx="1.6" ry="0.7" fill="#f2f2f2"/>
<rect x="0.3" y="10.5" width="11.6" height="5.2" fill="url(#gTb)" stroke="#64768a" stroke-width="0.5"/>
<rect x="0.6" y="11.3" width="11" height="0.8" fill="#a9b7c2"/>
<rect x="2.4" y="12.6" width="1.4" height="1.7" fill="#e6edf2"/><rect x="5.2" y="12.6" width="1.4" height="1.7" fill="#e6edf2"/><rect x="8" y="12.6" width="1.4" height="1.7" fill="#e6edf2"/></g>
<!-- header gear -->
<g transform="translate(212,89)" opacity="0.92"><g><circle cx="6.9" cy="6.9" r="6" fill="none" stroke="#7fa4ca" stroke-width="2.2" stroke-dasharray="1.7 1.4416" transform="rotate(-16 6.9 6.9)"/>
<circle cx="6.9" cy="6.9" r="4.4" fill="none" stroke="url(#gring)" stroke-width="2.4"/>
<circle cx="6.9" cy="6.9" r="3.1" fill="none" stroke="#858d94" stroke-width="0.8" stroke-opacity="0.85"/>
<circle cx="12.6" cy="12.6" r="2.7" fill="none" stroke="#7fa4ca" stroke-width="1.7" stroke-dasharray="1.1 1.0206" transform="rotate(-15 12.6 12.6)"/>
<circle cx="12.6" cy="12.6" r="1.6" fill="none" stroke="#a3c7e6" stroke-width="1.3"/></g></g>
<!-- expanders -->
<g transform="translate(18.2,109.1)"><path d="M5.2 0.6 L5.2 5.4 L0.4 5.4 Z" fill="#2e2e2e" stroke="#5c5c5c" stroke-width="0.7" stroke-linejoin="round"/></g>
<g transform="translate(18.2,235.1)"><path d="M5.2 0.6 L5.2 5.4 L0.4 5.4 Z" fill="#2e2e2e" stroke="#5c5c5c" stroke-width="0.7" stroke-linejoin="round"/></g>
<g transform="translate(18.2,271.1)"><path d="M5.2 0.6 L5.2 5.4 L0.4 5.4 Z" fill="#2e2e2e" stroke="#5c5c5c" stroke-width="0.7" stroke-linejoin="round"/></g>
<g transform="translate(38,126.2)"><path d="M0.5 0.5 L0.5 8.3 L4.6 4.4 Z" fill="#fff" stroke="#a6a6a6" stroke-width="1" stroke-linejoin="round"/></g>
<g transform="translate(38,144.2)"><path d="M0.5 0.5 L0.5 8.3 L4.6 4.4 Z" fill="#fff" stroke="#a6a6a6" stroke-width="1" stroke-linejoin="round"/></g>
<g transform="translate(38,162.2)"><path d="M0.5 0.5 L0.5 8.3 L4.6 4.4 Z" fill="#fff" stroke="#a6a6a6" stroke-width="1" stroke-linejoin="round"/></g>
<g transform="translate(38,180.2)"><path d="M0.5 0.5 L0.5 8.3 L4.6 4.4 Z" fill="#fff" stroke="#a6a6a6" stroke-width="1" stroke-linejoin="round"/></g>
<g transform="translate(38,198.2)"><path d="M0.5 0.5 L0.5 8.3 L4.6 4.4 Z" fill="#fff" stroke="#a6a6a6" stroke-width="1" stroke-linejoin="round"/></g>
<!-- System Tools: wrench + screwdriver -->
<path d="M35.2 118.2 L35 109.5 C33.2 108.5 32.6 106 33.6 104.2 L35.6 106.6 L37.4 105.6 L36.2 103.2 C38.6 103 40 105.4 39.6 107.6 C39.4 108.6 38.8 109.2 38 109.6 L38.2 118.2 Z" fill="url(#gSil)" stroke="#8a8a8a" stroke-width="0.7" stroke-linejoin="round"/>
<rect x="41.6" y="103.4" width="1.3" height="7" fill="#a9a9a9" stroke="#7c7c7c" stroke-width="0.4"/>
<path d="M40.4 110.2 L44 110.2 L44 112.4 L43.2 113 L43.9 113.8 L43.9 117.6 C43.9 118.6 40.5 118.6 40.5 117.6 L40.5 113.8 L41.2 113 L40.4 112.4 Z" fill="#f2b20a" stroke="#c48a00" stroke-width="0.5"/>
<!-- Task Scheduler: clock -->
<circle cx="58.1" cy="128.8" r="7.2" fill="url(#gFace)" stroke="#7e7e7e" stroke-width="1.4"/>
<path d="M58.1 128.8 L58.1 123 A5.8 5.8 0 0 1 63.9 128.8 Z" fill="#f1c964"/>
<path d="M58.1 124.6 L58.1 129.8 M57.2 128.8 L61.8 128.8" stroke="#46607f" stroke-width="1.2" fill="none"/>
<!-- Event Viewer -->
<rect x="52.8" y="140.4" width="12" height="14.2" fill="#bccbea" stroke="#4f64aa" stroke-width="1"/>
<g fill="#eef3fb"><rect x="54" y="142" width="10" height="1"/><rect x="54" y="144.4" width="10" height="1"/><rect x="54" y="146.8" width="10" height="1"/><rect x="54" y="149.2" width="10" height="1"/><rect x="54" y="151.6" width="10" height="1"/></g>
<rect x="51.4" y="141" width="2" height="13" fill="#9aa0aa"/>
<g fill="#5f6670"><rect x="51.2" y="142" width="2.6" height="0.8"/><rect x="51.2" y="144" width="2.6" height="0.8"/><rect x="51.2" y="146" width="2.6" height="0.8"/><rect x="51.2" y="148" width="2.6" height="0.8"/><rect x="51.2" y="150" width="2.6" height="0.8"/><rect x="51.2" y="152" width="2.6" height="0.8"/></g>
<path d="M60.3 141.6 L63.2 147 L57.4 147 Z" fill="#f6d21c" stroke="#d0a800" stroke-width="0.5" stroke-linejoin="round"/>
<rect x="59.9" y="143.4" width="0.9" height="2" fill="#222"/><rect x="59.9" y="145.8" width="0.9" height="0.8" fill="#222"/>
<circle cx="58.6" cy="150.7" r="2.7" fill="#dc2a2a" stroke="#b01010" stroke-width="0.4"/>
<path d="M57.5 149.6 L59.7 151.8 M59.7 149.6 L57.5 151.8" stroke="#fff" stroke-width="0.9"/>
<!-- Shared Folders -->
<path d="M50.6 161.8 L50.6 171.4 L63.6 171.4 L63.6 159.4 L57.6 159.4 L56.4 161.8 Z" fill="#f6dc92" stroke="#d3a94c" stroke-width="0.9"/>
<rect x="59" y="160" width="3.6" height="1.2" fill="#fff"/><rect x="61" y="160" width="1.6" height="1.2" fill="#3b86e6"/>
<rect x="57" y="162.4" width="6" height="8.4" fill="#f2d27c"/>
<path d="M50.2 172.6 C50.2 169 55.4 169 55.6 172.6 Z" fill="#3fae62" stroke="#2c8a48" stroke-width="0.4"/>
<path d="M54.8 171.8 C54.8 168.6 59.8 168.6 59.8 171.8 Z" fill="#39a0d4" stroke="#2a7fb0" stroke-width="0.4"/>
<circle cx="52.8" cy="166.6" r="1.7" fill="#c8895a"/><path d="M51 166.2 C51 164 54.6 164 54.6 166.2 C53.6 165.4 52 165.4 51 166.2 Z" fill="#2a2a2a"/>
<circle cx="57.2" cy="166.2" r="1.7" fill="#c8895a"/><path d="M55.4 165.8 C55.4 163.6 59 163.6 59 165.8 C58 165 56.4 165 55.4 165.8 Z" fill="#2a2a2a"/>
<!-- Local Users and Groups -->
<rect x="53.6" y="175.4" width="12" height="10" rx="0.8" fill="#dcd9cd" stroke="#b3af9f" stroke-width="0.7"/>
<rect x="55" y="177" width="9" height="7" fill="url(#gScr)"/>
<path d="M50.2 188.8 C50 184.4 57 184.4 57 188.8 Z" fill="#58ae4c" stroke="#3c8c34" stroke-width="0.4"/>
<path d="M53 185 L53.6 187.4 L54.2 185 Z" fill="#fff"/>
<circle cx="53.6" cy="181.6" r="2" fill="#e2b07a"/><path d="M51.4 181.2 C51.2 178.2 56 178.2 55.8 181.2 C54.6 180 52.6 180 51.4 181.2 Z" fill="#d9b64a"/>
<path d="M55.8 190.4 C55.6 185.6 63.8 185.6 63.8 190.4 Z" fill="#8eb6e2" stroke="#5c8cc4" stroke-width="0.4"/>
<path d="M58.2 186.4 L58.8 188.8 L59.4 186.4 Z" fill="#fff"/>
<circle cx="58.8" cy="183.2" r="2.1" fill="#c98a58"/><path d="M56.6 182.8 C56.4 179.6 61.2 179.6 61 182.8 C59.8 181.6 57.8 181.6 56.6 182.8 Z" fill="#3a3a3a"/>
<!-- Performance -->
<circle cx="58.1" cy="200.8" r="7.2" fill="#fbfaf6" stroke="#8a8a8a" stroke-width="1.4"/>
<path d="M54 203 A4.6 4.6 0 0 1 60.6 196.8" fill="none" stroke="#3f8f60" stroke-width="1.3" stroke-dasharray="0.9 0.7"/>
<path d="M60.4 197.2 C62.6 198.4 62.8 201 61.8 202.8 L59 202.4" fill="none" stroke="#de1414" stroke-width="1.5" stroke-linejoin="round"/>
<path d="M54.8 196.8 L58.8 202.2" stroke="#e81818" stroke-width="1.8" stroke-linecap="round"/>
<!-- Device Manager -->
<rect x="57.6" y="211.4" width="7" height="8.4" fill="#fbfbfb" stroke="#9c9c9c" stroke-width="0.7"/>
<rect x="60.4" y="213" width="1.6" height="5.4" fill="#d8dce0"/><rect x="60.4" y="213" width="1.6" height="1.8" fill="#5cd02c"/>
<path d="M54.6 219.8 C55 216.8 60.4 216.8 60.8 219.8" fill="none" stroke="#1e1e1e" stroke-width="1.3"/>
<ellipse cx="57.7" cy="218.8" rx="1.8" ry="0.7" fill="#e8e8e8"/>
<rect x="50.4" y="219.6" width="15.2" height="7" fill="url(#gTb)" stroke="#64768a" stroke-width="0.5"/>
<rect x="50.8" y="221" width="14.4" height="0.8" fill="#a9b7c2"/>
<rect x="53.2" y="221.8" width="1.2" height="3" fill="#eef2f5"/><rect x="61.4" y="221.8" width="1.2" height="3" fill="#eef2f5"/>
<!-- Storage -->
<circle cx="35.8" cy="233.6" r="4.9" fill="#d8dcd8" stroke="#a4a8a4" stroke-width="0.6"/>
<path d="M35.8 233.6 L31.4 231.6 A4.9 4.9 0 0 1 33.6 229.2 Z" fill="#8fd68a"/>
<circle cx="35.8" cy="233.6" r="1.3" fill="#fff" stroke="#9a9a9a" stroke-width="0.4"/>
<rect x="39.2" y="231.2" width="7.6" height="5.6" rx="1.2" fill="#3f9ede" stroke="#2c7cba" stroke-width="0.6"/>
<rect x="40" y="232" width="6" height="1.4" fill="#8ccaf2"/>
<rect x="31.2" y="238.3" width="15.6" height="6" rx="1.4" fill="url(#gDrv)" stroke="#85858e" stroke-width="0.8"/>
<rect x="42.8" y="240" width="1.6" height="3" fill="#3fc83a"/>
<!-- Disk Management -->
<rect x="50.6" y="255.4" width="13.6" height="7.4" fill="#9c9c9c" stroke="#8a8a8a" stroke-width="0.4"/>
<rect x="51.6" y="257" width="11" height="0.9" fill="#e8e8e8"/><rect x="52.4" y="259.6" width="9.6" height="0.9" fill="#e8e8e8"/>
<path d="M50.6 255.6 L50.6 250 C50.6 247.6 52 247.4 53 247.4 L63.4 247.4 C64.6 247.4 65.8 248 65.8 250 L65.8 255.6 Z" fill="url(#gDrv)" stroke="#8c8c92" stroke-width="0.7"/>
<rect x="52" y="248.2" width="12" height="1.6" fill="#fff"/>
<rect x="55" y="253" width="5.4" height="1.2" fill="#3a3a3a"/>
<rect x="62" y="250.8" width="1.6" height="2.6" fill="#5cc83a" stroke="#b08a2a" stroke-width="0.3"/>
<rect x="53" y="254" width="1.2" height="1" fill="#2a3cd0"/><rect x="60.6" y="254" width="1.2" height="1" fill="#2a3cd0"/>
<!-- Services and Applications -->
<rect x="33.3" y="265.2" width="7.6" height="15.2" fill="#cfd4d8" stroke="#8c949a" stroke-width="0.7"/>
<rect x="34.4" y="266.4" width="5.4" height="1.2" fill="#4a5660"/>
<rect x="34.2" y="268.8" width="5.8" height="0.8" fill="#f4f6f8"/><rect x="34.2" y="270.6" width="5.8" height="0.8" fill="#f4f6f8"/><rect x="34.2" y="272.4" width="5.8" height="0.8" fill="#9aa4ac"/>
<rect x="38" y="279" width="1.6" height="1" fill="#5cd83a"/>
<circle cx="42.6" cy="276.4" r="3.7" fill="none" stroke="#5d95d6" stroke-width="1.8" stroke-dasharray="1.3 1.024" transform="rotate(-10 42.6 276.4)"/>
<circle cx="42.6" cy="276.4" r="2.3" fill="#fff" stroke="#6aa5e4" stroke-width="1.6"/>
<!-- Services (tree) -->
<g transform="translate(50,283)"><g><circle cx="6.9" cy="6.9" r="6" fill="none" stroke="#7fa4ca" stroke-width="2.2" stroke-dasharray="1.7 1.4416" transform="rotate(-16 6.9 6.9)"/>
<circle cx="6.9" cy="6.9" r="4.4" fill="none" stroke="url(#gring)" stroke-width="2.4"/>
<circle cx="6.9" cy="6.9" r="3.1" fill="none" stroke="#858d94" stroke-width="0.8" stroke-opacity="0.85"/>
<circle cx="12.6" cy="12.6" r="2.7" fill="none" stroke="#7fa4ca" stroke-width="1.7" stroke-dasharray="1.1 1.0206" transform="rotate(-15 12.6 12.6)"/>
<circle cx="12.6" cy="12.6" r="1.6" fill="none" stroke="#a3c7e6" stroke-width="1.3"/></g></g>
<!-- WMI Control -->
<path d="M54.2 306 C54.6 303 58.8 303 59.2 306" fill="none" stroke="#1e1e1e" stroke-width="1.4"/>
<rect x="50.3" y="305.8" width="15.4" height="8.6" fill="url(#gTb)" stroke="#64768a" stroke-width="0.5"/>
<rect x="50.6" y="307.6" width="14.8" height="0.8" fill="#a9b7c2"/>
<rect x="53" y="308.4" width="1.2" height="3" fill="#eef2f5"/>
<path d="M59.6 306.6 C58.6 304.4 59.6 302.2 61.6 301.4 L62.2 303.8 L64 303.6 L64.8 301.6 C66.4 303 66.2 305.6 64.4 306.8 L62.6 308.4 L60.8 308 Z" fill="url(#gSil)" stroke="#8e8e8e" stroke-width="0.6" stroke-linejoin="round"/>
<path d="M60.6 307.4 L63.4 307.4 L63.4 315.4 C63.4 317.2 60.6 317.2 60.6 315.4 Z" fill="#9cc4f4" stroke="#3f78c8" stroke-width="0.7"/>
<rect x="61.4" y="308.4" width="0.8" height="6.6" fill="#e2effc"/>
</svg>

<div id="txt">
<span class="t" style="left:29.60px;top:12px;letter-spacing:0.339px;">Computer Management</span>
<span class="t" style="left:16.20px;top:34px;letter-spacing:0.200px;">File</span>
<span class="t" style="left:51.40px;top:34px;letter-spacing:0.640px;">Action</span>
<span class="t" style="left:102.20px;top:34px;letter-spacing:-0.100px;">View</span>
<span class="t" style="left:142.30px;top:34px;letter-spacing:0.700px;">Help</span>
<span class="t" style="left:33.60px;top:86px;letter-spacing:0.252px;">Computer Management (Local</span>
<span class="t" style="left:51.00px;top:104px;letter-spacing:0.264px;">System Tools</span>
<span class="t" style="left:71.60px;top:122px;letter-spacing:-0.046px;">Task Scheduler</span>
<span class="t" style="left:70.60px;top:140px;letter-spacing:-0.064px;">Event Viewer</span>
<span class="t" style="left:70.60px;top:158px;letter-spacing:-0.085px;">Shared Folders</span>
<span class="t" style="left:70.60px;top:176px;letter-spacing:-0.043px;">Local Users and Groups</span>
<span class="t" style="left:70.60px;top:194px;letter-spacing:0.230px;">Performance</span>
<span class="t" style="left:70.60px;top:212px;letter-spacing:0.069px;">Device Manager</span>
<span class="t" style="left:51.00px;top:230px;letter-spacing:0.150px;">Storage</span>
<span class="t" style="left:70.60px;top:248px;letter-spacing:0.200px;">Disk Management</span>
<span class="t" style="left:51.00px;top:266px;letter-spacing:0.163px;">Services and Applications</span>
<span class="t" style="left:70.60px;top:284px;letter-spacing:-0.300px;">Services</span>
<span class="t" style="left:71.60px;top:302px;letter-spacing:0.390px;">WMI Control</span>
<span class="t" style="left:236.30px;top:90px;letter-spacing:-0.186px;">Services</span>
<span class="t b" style="left:206.20px;top:115px;letter-spacing:0.184px;">RDP+ Client Update Manager</span>
<span class="t lnk" style="left:206.20px;top:148px;letter-spacing:0.533px;">Stop</span>
<span class="t" style="left:234.40px;top:148px;letter-spacing:0.050px;">the service</span>
<span class="t lnk" style="left:206.20px;top:163px;letter-spacing:-0.067px;">Restart</span>
<span class="t" style="left:246.20px;top:163px;letter-spacing:0.080px;">the service</span>
<span class="t" style="left:206.20px;top:208px;letter-spacing:0.300px;">Description:</span>
<span class="t" style="left:206.20px;top:223px;letter-spacing:0.170px;">Update Manager for the RDP+ Client</span>
<span class="t" style="left:206.20px;top:238px;letter-spacing:0.243px;">Software</span>
<span class="t" style="left:419.30px;top:114px;letter-spacing:1.000px;">Name</span>
<span class="t" style="left:645.20px;top:114px;letter-spacing:0.310px;">Description</span>
<span class="t" style="left:730.00px;top:114px;letter-spacing:0.100px;">Status</span>
<span class="t" style="left:793.30px;top:114px;letter-spacing:0.164px;">Startup Type</span>
<span class="t" style="left:885.90px;top:114px;width:5.10px;overflow:hidden;">L</span>
<span class="t" style="left:435.70px;top:136px;letter-spacing:0.125px;">Parental Controls</span>
<span class="t" style="left:646.30px;top:136px;letter-spacing:-0.040px;">This service ...</span>
<span class="t" style="left:793.30px;top:136px;letter-spacing:0.580px;">Manual</span>
<span class="t" style="left:885.70px;top:136px;width:5.30px;overflow:hidden;">L</span>
<span class="t" style="left:435.70px;top:155px;letter-spacing:0.143px;">Peer Name Resolution Protocol</span>
<span class="t" style="left:645.30px;top:155px;letter-spacing:-0.043px;">Enables serv...</span>
<span class="t" style="left:793.30px;top:155px;letter-spacing:0.580px;">Manual</span>
<span class="t" style="left:885.70px;top:155px;width:5.30px;overflow:hidden;">L</span>
<span class="t" style="left:435.70px;top:174px;letter-spacing:0.239px;">Peer Networking Grouping</span>
<span class="t" style="left:645.30px;top:174px;letter-spacing:0.108px;">Enables mul...</span>
<span class="t" style="left:793.30px;top:174px;letter-spacing:0.580px;">Manual</span>
<span class="t" style="left:885.70px;top:174px;width:5.30px;overflow:hidden;">L</span>
<span class="t" style="left:435.70px;top:193px;letter-spacing:0.229px;">Peer Networking Identity Manager</span>
<span class="t" style="left:645.30px;top:193px;letter-spacing:0.100px;">Provides ide...</span>
<span class="t" style="left:793.30px;top:193px;letter-spacing:0.580px;">Manual</span>
<span class="t" style="left:885.70px;top:193px;width:5.30px;overflow:hidden;">L</span>
<span class="t" style="left:435.70px;top:212px;letter-spacing:0.204px;">Performance Logs &amp; Alerts</span>
<span class="t" style="left:645.30px;top:212px;letter-spacing:0.283px;">Performanc...</span>
<span class="t" style="left:793.30px;top:212px;letter-spacing:0.580px;">Manual</span>
<span class="t" style="left:885.70px;top:212px;width:5.30px;overflow:hidden;">L</span>
<span class="t" style="left:435.70px;top:231px;letter-spacing:0.100px;">Plug and Play</span>
<span class="t" style="left:645.30px;top:231px;letter-spacing:-0.123px;">Enables a c...</span>
<span class="t" style="left:729.90px;top:231px;letter-spacing:0.067px;">Started</span>
<span class="t" style="left:794.30px;top:231px;letter-spacing:0.513px;">Automatic</span>
<span class="t" style="left:885.70px;top:231px;width:5.30px;overflow:hidden;">L</span>
<span class="t" style="left:435.70px;top:250px;letter-spacing:0.014px;">PnP-X IP Bus Enumerator</span>
<span class="t" style="left:646.30px;top:250px;letter-spacing:-0.083px;">The PnP-X ...</span>
<span class="t" style="left:793.30px;top:250px;letter-spacing:0.580px;">Manual</span>
<span class="t" style="left:885.70px;top:250px;width:5.30px;overflow:hidden;">L</span>
<span class="t" style="left:435.70px;top:269px;letter-spacing:0.076px;">PNRP Machine Name Publication Se...</span>
<span class="t" style="left:646.30px;top:269px;letter-spacing:-0.040px;">This service ...</span>
<span class="t" style="left:793.30px;top:269px;letter-spacing:0.580px;">Manual</span>
<span class="t" style="left:885.70px;top:269px;width:5.30px;overflow:hidden;">L</span>
<span class="t" style="left:435.70px;top:288px;letter-spacing:0.042px;">Portable Device Enumerator Service</span>
<span class="t" style="left:645.30px;top:288px;letter-spacing:0.077px;">Enforces gr...</span>
<span class="t" style="left:793.30px;top:288px;letter-spacing:0.580px;">Manual</span>
<span class="t" style="left:885.70px;top:288px;width:5.30px;overflow:hidden;">L</span>
<span class="t" style="left:435.70px;top:307px;letter-spacing:-0.050px;">Power</span>
<span class="t" style="left:645.30px;top:307px;letter-spacing:0.127px;">Manages p...</span>
<span class="t" style="left:729.90px;top:307px;letter-spacing:0.067px;">Started</span>
<span class="t" style="left:794.30px;top:307px;letter-spacing:0.513px;">Automatic</span>
<span class="t" style="left:885.70px;top:307px;width:5.30px;overflow:hidden;">L</span>
<span class="t" style="left:435.70px;top:326px;letter-spacing:0.092px;">Print Spooler</span>
<span class="t" style="left:645.30px;top:326px;letter-spacing:0.093px;">Loads files t...</span>
<span class="t" style="left:729.90px;top:326px;letter-spacing:0.067px;">Started</span>
<span class="t" style="left:794.30px;top:326px;letter-spacing:0.513px;">Automatic</span>
<span class="t" style="left:885.70px;top:326px;width:5.30px;overflow:hidden;">L</span>
<span class="t" style="left:435.70px;top:345px;letter-spacing:0.156px;">Problem Reports and Solutions Cont...</span>
<span class="t" style="left:646.30px;top:345px;letter-spacing:-0.040px;">This service ...</span>
<span class="t" style="left:793.30px;top:345px;letter-spacing:0.580px;">Manual</span>
<span class="t" style="left:885.70px;top:345px;width:5.30px;overflow:hidden;">L</span>
<span class="t" style="left:435.70px;top:364px;letter-spacing:0.195px;">Program Compatibility Assistant Ser...</span>
<span class="t" style="left:646.30px;top:364px;letter-spacing:-0.040px;">This service ...</span>
<span class="t" style="left:729.90px;top:364px;letter-spacing:0.067px;">Started</span>
<span class="t" style="left:793.30px;top:364px;letter-spacing:0.580px;">Manual</span>
<span class="t" style="left:885.70px;top:364px;width:5.30px;overflow:hidden;">L</span>
<span class="t" style="left:435.70px;top:383px;letter-spacing:0.131px;">Protected Storage</span>
<span class="t" style="left:645.30px;top:383px;letter-spacing:0.154px;">Provides pr...</span>
<span class="t" style="left:793.30px;top:383px;letter-spacing:0.580px;">Manual</span>
<span class="t" style="left:885.70px;top:383px;width:5.30px;overflow:hidden;">L</span>
<span class="t" style="left:436.70px;top:402px;letter-spacing:0.128px;">Quality Windows Audio Video Experi...</span>
<span class="t" style="left:646.30px;top:402px;letter-spacing:0.185px;">Quality Win...</span>
<span class="t" style="left:793.30px;top:402px;letter-spacing:0.580px;">Manual</span>
<span class="t" style="left:885.70px;top:402px;width:5.30px;overflow:hidden;">L</span>
<span class="t w" style="left:435.70px;top:421px;letter-spacing:0.116px;">RDP+ Client Update Manager</span>
<span class="t w" style="left:645.30px;top:421px;letter-spacing:0.218px;">Update Ma...</span>
<span class="t w" style="left:729.90px;top:421px;letter-spacing:0.067px;">Started</span>
<span class="t w" style="left:794.30px;top:421px;letter-spacing:0.513px;">Automatic</span>
<span class="t w" style="left:885.70px;top:421px;width:5.30px;overflow:hidden;">L</span>
<span class="t" style="left:435.70px;top:440px;letter-spacing:0.242px;">Remote Access Auto Connection M...</span>
<span class="t" style="left:646.30px;top:440px;letter-spacing:-0.114px;">Creates a co...</span>
<span class="t" style="left:793.30px;top:440px;letter-spacing:0.580px;">Manual</span>
<span class="t" style="left:885.70px;top:440px;width:5.30px;overflow:hidden;">L</span>
<span class="t" style="left:435.70px;top:459px;letter-spacing:0.165px;">Remote Access Connection Manager</span>
<span class="t" style="left:645.30px;top:459px;letter-spacing:0.192px;">Manages di...</span>
<span class="t" style="left:793.30px;top:459px;letter-spacing:0.580px;">Manual</span>
<span class="t" style="left:885.70px;top:459px;width:5.30px;overflow:hidden;">L</span>
<span class="t" style="left:435.70px;top:478px;letter-spacing:0.252px;">Remote Desktop Configuration</span>
<span class="t" style="left:645.30px;top:478px;letter-spacing:-0.058px;">Remote Des...</span>
<span class="t" style="left:793.30px;top:478px;letter-spacing:0.580px;">Manual</span>
<span class="t" style="left:885.70px;top:478px;width:5.30px;overflow:hidden;">L</span>
<span class="t" style="left:435.70px;top:497px;letter-spacing:-0.055px;">Remote Desktop Services</span>
<span class="t" style="left:646.30px;top:497px;letter-spacing:0.108px;">Allows user...</span>
<span class="t" style="left:793.30px;top:497px;letter-spacing:0.580px;">Manual</span>
<span class="t" style="left:885.70px;top:497px;width:5.30px;overflow:hidden;">N</span>
<span class="t" style="left:435.70px;top:516px;letter-spacing:-0.011px;">Remote Desktop Services UserMode ...</span>
<span class="t" style="left:646.30px;top:516px;letter-spacing:0.171px;">Allows the r...</span>
<span class="t" style="left:793.30px;top:516px;letter-spacing:0.580px;">Manual</span>
<span class="t" style="left:885.70px;top:516px;width:5.30px;overflow:hidden;">L</span>
<span class="t" style="left:435.70px;top:535px;letter-spacing:-0.019px;">Remote Procedure Call (RPC)</span>
<span class="t" style="left:646.30px;top:535px;letter-spacing:-0.550px;">The RPCSS ...</span>
<span class="t" style="left:729.90px;top:535px;letter-spacing:0.067px;">Started</span>
<span class="t" style="left:794.30px;top:535px;letter-spacing:0.513px;">Automatic</span>
<span class="t" style="left:885.70px;top:535px;width:5.30px;overflow:hidden;">N</span>
<span class="t" style="left:435.70px;top:554px;letter-spacing:0.029px;">Remote Procedure Call (RPC) Locator</span>
<span class="t" style="left:645.30px;top:554px;letter-spacing:0.283px;">In Windows...</span>
<span class="t" style="left:793.30px;top:554px;letter-spacing:0.580px;">Manual</span>
<span class="t" style="left:885.70px;top:554px;width:5.30px;overflow:hidden;">N</span>
<span class="t" style="left:435.70px;top:573px;letter-spacing:-0.007px;">Remote Registry</span>
<span class="t" style="left:645.30px;top:573px;letter-spacing:0.031px;">Enables rem...</span>
<span class="t" style="left:793.30px;top:573px;letter-spacing:0.580px;">Manual</span>
<span class="t" style="left:885.70px;top:573px;width:5.30px;overflow:hidden;">L</span>
<span class="t" style="left:435.70px;top:592px;letter-spacing:0.112px;">Routing and Remote Access</span>
<span class="t" style="left:646.30px;top:592px;letter-spacing:0.243px;">Offers routi...</span>
<span class="t" style="left:793.30px;top:592px;letter-spacing:0.100px;">Disabled</span>
<span class="t" style="left:885.70px;top:592px;width:5.30px;overflow:hidden;">L</span>
<span class="t" style="left:435.70px;top:611px;letter-spacing:0.106px;">RPC Endpoint Mapper</span>
<span class="t" style="left:645.30px;top:611px;letter-spacing:-0.200px;">Resolves RP...</span>
<span class="t" style="left:729.90px;top:611px;letter-spacing:0.067px;">Started</span>
<span class="t" style="left:794.30px;top:611px;letter-spacing:0.513px;">Automatic</span>
<span class="t" style="left:885.70px;top:611px;width:5.30px;overflow:hidden;">N</span>
<span class="t" style="left:435.70px;top:630px;letter-spacing:0.121px;">Secondary Logon</span>
<span class="t" style="left:645.30px;top:630px;letter-spacing:-0.043px;">Enables star...</span>
<span class="t" style="left:793.30px;top:630px;letter-spacing:0.580px;">Manual</span>
<span class="t" style="left:885.70px;top:630px;width:5.30px;overflow:hidden;">L</span>
<span class="t" style="left:212.20px;top:668px;letter-spacing:-0.271px;">Extended</span>
<span class="t" style="left:276.00px;top:668px;letter-spacing:0.057px;">Standard</span>
</div>
</body>
</html>
